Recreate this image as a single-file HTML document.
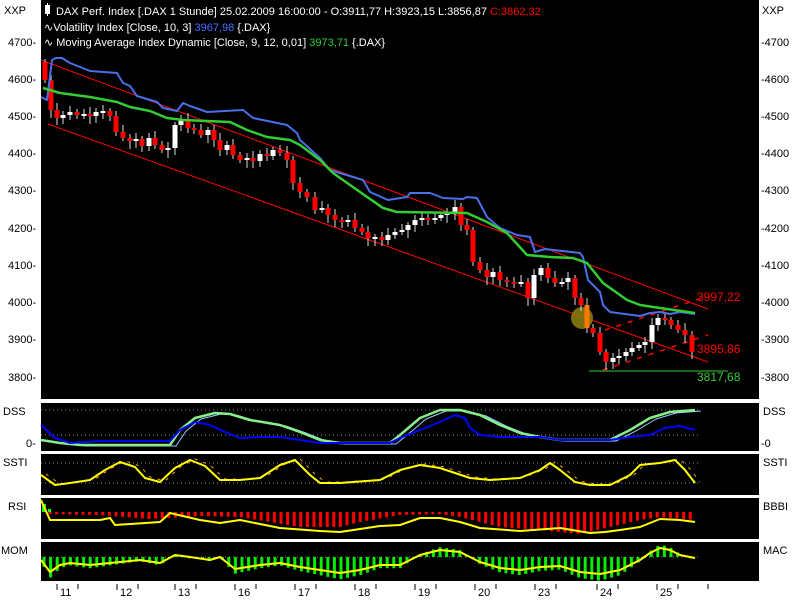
<!DOCTYPE html>
<html><head><meta charset="utf-8"><style>
html,body{margin:0;padding:0;background:#fff;width:800px;height:600px;overflow:hidden}
svg{display:block;font-family:"Liberation Sans",sans-serif}
</style></head><body>
<svg id="s" width="800" height="600" xmlns="http://www.w3.org/2000/svg">
<rect x="0" y="0" width="800" height="600" fill="#fff"/>
<rect x="41" y="0" width="718" height="399" fill="#000"/>
<rect x="41" y="403" width="718" height="48" fill="#000"/>
<rect x="41" y="454" width="718" height="41" fill="#000"/>
<rect x="41" y="498" width="718" height="41" fill="#000"/>
<rect x="41" y="542" width="718" height="39" fill="#000"/>
<g id="g"></g>
<g font-size="11" fill="#000">
<text x="4" y="14">XXP</text><text x="762" y="14">XXP</text>
<text x="8" y="46">4700-</text><text x="8" y="83">4600-</text><text x="8" y="120">4500-</text><text x="8" y="157">4400-</text><text x="8" y="194">4300-</text><text x="8" y="232">4200-</text><text x="8" y="269">4100-</text><text x="8" y="306">4000-</text><text x="8" y="343">3900-</text><text x="8" y="381">3800-</text>
<text x="761" y="46">-4700</text><text x="761" y="83">-4600</text><text x="761" y="120">-4500</text><text x="761" y="157">-4400</text><text x="761" y="194">-4300</text><text x="761" y="232">-4200</text><text x="761" y="269">-4100</text><text x="761" y="306">-4000</text><text x="761" y="343">-3900</text><text x="761" y="381">-3800</text>
<text x="3" y="415">DSS</text><text x="26" y="447">0-</text>
<text x="3" y="466">SSTI</text>
<text x="8" y="510">RSI</text>
<text x="1" y="554">MOM</text>
<text x="763" y="415">DSS</text><text x="761" y="447">-0</text>
<text x="763" y="466">SSTI</text>
<text x="763" y="510">BBBI</text>
<text x="763" y="554">MAC</text>
</g>
<g font-size="11" fill="#000" id="xa"></g>
<g font-size="11" fill="#fff">
<rect x="45" y="5" width="5" height="9" fill="#fff"/><line x1="47.5" y1="3" x2="47.5" y2="16" stroke="#fff"/>
<text x="56" y="15">DAX Perf. Index [.DAX  1 Stunde] 25.02.2009 16:00:00 - O:3911,77 H:3923,15 L:3856,87 <tspan fill="#f00">C:3862,32</tspan></text>
<text x="44" y="31">∿Volatility Index [Close, 10, 3] <tspan fill="#4a6fff">3967,98</tspan> {.DAX}</text>
<text x="44" y="46">∿ Moving Average Index Dynamic [Close, 9, 12, 0,01] <tspan fill="#3c3">3973,71</tspan> {.DAX}</text>
<text x="697" y="301" fill="#f00" font-size="12">3997,22</text>
<text x="697" y="353" fill="#f00" font-size="12">3895,86</text>
<text x="697" y="381" fill="#3c3" font-size="12">3817,68</text>
</g>
</svg>
<script>
(function(){
var g=document.getElementById('g'),NS='http://www.w3.org/2000/svg';
function el(t,a){var e=document.createElementNS(NS,t);for(var k in a)e.setAttribute(k,a[k]);g.appendChild(e);return e}
function pl(p,c,w,extra){var s=p.map(function(q){return q[0]+','+q[1]}).join(' ');var a={points:s,fill:'none',stroke:c,'stroke-width':w||2,'stroke-linejoin':'round'};for(var k in extra)a[k]=extra[k];el('polyline',a)}
function dot(y){el('line',{x1:41,x2:700,y1:y,y2:y,stroke:'#888','stroke-dasharray':'1,3'})}
function interp(p,x){for(var i=0;i<p.length-1;i++){if(x>=p[i][0]&&x<=p[i+1][0]){var t=(x-p[i][0])/(p[i+1][0]-p[i][0]);return p[i][1]+t*(p[i+1][1]-p[i][1])}}return p[p.length-1][1]}
el('line',{x1:41,y1:60,x2:708,y2:309,stroke:'#f00','stroke-width':1});
el('line',{x1:48,y1:124,x2:708,y2:362,stroke:'#f00','stroke-width':1});
el('line',{x1:603,y1:370,x2:708,y2:335,stroke:'#f00','stroke-width':1.5,'stroke-dasharray':'5,7'});
el('line',{x1:605,y1:330,x2:708,y2:296,stroke:'#f00','stroke-width':1.5,'stroke-dasharray':'5,7'});
el('line',{x1:589,y1:371,x2:728,y2:371,stroke:'#3c3','stroke-width':1});
var C=[[45,80],[51,110],[57,118],[63,115],[70,112],[77,115],[84,114],[90,116],[96,112],[103,111],[110,116],[116,132],[123,138],[130,141],[136,139],[142,146],[149,138],[155,145],[162,150],[168,148],[175,125],[181,120],[188,128],[194,130],[201,135],[208,130],[214,140],[220,150],[227,145],[233,155],[240,160],[247,158],[253,161],[260,154],[267,156],[273,150],[280,153],[287,160],[293,183],[300,192],[307,197],[315,210],[322,208],[328,215],[335,220],[342,222],[348,220],[355,228],[362,232],[368,238],[375,237],[382,240],[388,235],[395,232],[402,230],[408,225],[415,220],[422,218],[428,220],[435,218],[441,215],[447,213],[455,207],[461,225],[467,230],[473,262],[480,270],[487,277],[493,272],[500,280],[507,282],[514,283],[521,282],[528,298],[534,275],[541,268],[548,278],[555,283],[562,282],[568,278],[575,298],[581,305],[587,328],[593,333],[600,352],[606,362],[613,358],[619,356],[626,352],[632,348],[639,345],[645,342],[652,325],[658,318],[665,320],[671,325],[678,330],[685,335],[692,352]];
var prev=C[0][1]-18;
el('circle',{cx:582,cy:318,r:11,fill:'#8a7a10',opacity:0.9});
for(var i=0;i<C.length;i++){var cx=C[i][0],cy=C[i][1];var bt=Math.min(prev,cy),bb=Math.max(prev,cy);if(bb-bt<2){bb=bt+2}
var h1=3+((i*7)%5),h2=3+((i*11)%6);
el('line',{x1:cx,x2:cx,y1:bt-h1,y2:bb+h2,stroke:'#ddd','stroke-width':1});
var col=cy>prev?'#f00':'#fff';if(cx==587)col='#ff7700';
el('rect',{x:cx-2.5,y:bt,width:5,height:bb-bt,fill:col});prev=cy}
pl([[41,97],[47,100],[52,60],[56,58],[62,58],[70,63],[90,71],[117,73],[123,83],[130,86],[137,96],[157,102],[163,108],[177,111],[183,103],[190,106],[207,112],[243,110],[253,118],[287,125],[297,133],[300,140],[320,158],[330,170],[363,180],[370,192],[388,200],[407,197],[410,193],[430,193],[443,198],[463,199],[467,197],[477,198],[487,217],[500,228],[517,235],[530,237],[535,252],[545,249],[580,253],[583,257],[588,280],[600,292],[603,305],[610,312],[640,316],[650,313],[660,312],[670,314],[680,312],[695,314]],'#4a6fe8',2);
pl([[43,88],[60,93],[90,97],[117,102],[130,107],[150,111],[167,118],[183,120],[230,122],[247,130],[267,137],[290,140],[300,145],[320,160],[333,173],[360,192],[383,208],[397,212],[467,213],[487,222],[507,233],[527,255],[550,257],[573,258],[587,263],[603,283],[627,300],[640,305],[660,308],[695,313]],'#3c3',2.5);
dot(410);dot(435);
var gr=[[41,440],[60,443],[80,445],[170,445],[180,430],[195,418],[215,413],[230,414],[250,420],[280,425],[300,432],[320,440],[340,443],[390,443],[400,435],[420,418],[440,410],[460,410],[480,415],[500,425],[520,433],[540,437],[560,440],[610,440],[630,430],[650,418],[670,412],[695,410]];
pl(gr.map(function(q){return [q[0]+6,q[1]+1]}),'#9cf',1);
pl(gr,'#8e8',2.5);
pl([[41,425],[55,438],[70,443],[100,441],[170,441],[180,430],[195,422],[210,425],[225,432],[240,438],[260,437],[280,437],[300,440],[320,443],[390,443],[400,438],[420,430],[440,422],[455,415],[465,418],[470,428],[480,435],[500,437],[540,437],[560,440],[610,440],[630,437],[650,435],[665,428],[680,426],[695,430]],'#00f',2);
dot(463);dot(483);
var ss=[[41,475],[55,485],[70,483],[90,480],[105,470],[120,462],[135,467],[145,478],[160,482],[175,468],[190,460],[205,466],[220,480],[240,480],[260,478],[280,465],[295,460],[310,475],[320,483],[340,483],[380,480],[400,470],[420,465],[440,468],[455,473],[470,478],[490,480],[520,478],[540,470],[550,463],[560,470],[575,482],[590,485],[610,485],[630,475],[640,465],[660,463],[675,460],[685,470],[695,483]];
pl(ss.map(function(q){return [q[0]+5,q[1]-1]}),'#fa0',1,{'stroke-dasharray':'3,6'});
pl(ss,'#ff0',2);
var rd=[[41,2],[100,3],[150,7],[200,4],[240,5],[300,15],[340,15],[360,10],[400,3],[440,2],[460,5],[500,15],[540,18],[580,22],[610,15],[640,8],[660,5],[695,8]];
for(var x=50;x<=695;x+=6.6){var d=interp(rd,x);el('rect',{x:x-1.5,y:512,width:3,height:Math.max(2,d),fill:'#f00'})}
el('rect',{x:42,y:504,width:4,height:8,fill:'#0f0'});el('rect',{x:48,y:509,width:3,height:3,fill:'#0f0'});
pl([[41,500],[50,520],[100,520],[110,518],[115,525],[160,522],[170,513],[200,520],[220,523],[240,520],[280,528],[320,531],[340,532],[380,526],[400,525],[420,518],[440,518],[460,522],[480,528],[520,531],[560,528],[590,533],[605,532],[620,530],[640,527],[660,519],[680,520],[695,522]],'#ff0',2);
dot(557);
var mm=[[41,560],[50,572],[60,565],[70,563],[90,565],[110,563],[140,560],[160,563],[175,555],[190,557],[210,560],[220,557],[235,569],[260,565],[280,563],[300,567],[320,570],[340,573],[360,570],[380,565],[400,565],[420,555],[440,550],[460,552],[480,562],[500,568],[520,570],[540,567],[560,566],[580,572],[600,574],[620,570],[640,560],[650,553],[660,548],[670,550],[680,555],[695,558]];
for(var x2=44;x2<=695;x2+=6.6){var v=interp(mm,x2)-557;var dd=v*1.4;var y0=dd>0?557:557+dd;el('rect',{x:x2-1.5,y:y0,width:3,height:Math.max(1.5,Math.abs(dd)),fill:'#0e0'})}
pl(mm,'#ff0',2);
var xa=document.getElementById('xa');var L=[[60,'11'],[120,'12'],[178,'13'],[238,'16'],[298,'17'],[358,'18'],[418,'19'],[478,'20'],[538,'23'],[600,'24'],[660,'25']];
L.forEach(function(l){var t=document.createElementNS(NS,'text');t.setAttribute('x',l[0]);t.setAttribute('y',596);t.textContent=l[1];xa.appendChild(t);
el('line',{x1:l[0]-3,x2:l[0]-3,y1:584,y2:590,stroke:'#000'});el('line',{x1:l[0]+18,x2:l[0]+18,y1:584,y2:589,stroke:'#000'})});
el('line',{x1:708,x2:708,y1:584,y2:589,stroke:'#000'});
})();
</script>
</body></html>
